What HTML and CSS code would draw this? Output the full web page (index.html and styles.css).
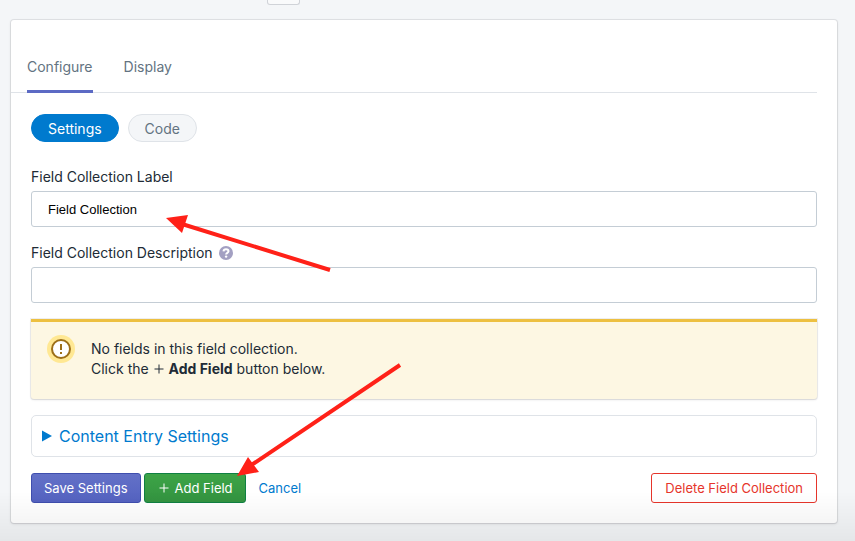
FILE: index.html
```html
<!DOCTYPE html>
<html lang="en">
<head>
  <meta charset="UTF-8">
  <meta name="viewport" content="width=device-width, initial-scale=1.0">
  <title>Field Collection</title>
  <link rel="stylesheet" href="styles.css">
</head>
<body>
<header class="topbar">
  <button type="button" class="topbar-button" aria-label="More"></button>
</header>

<main class="card">
  <nav class="tabs">
    <a href="#configure" class="tab active">Configure</a>
    <a href="#display" class="tab">Display</a>
  </nav>

  <form class="content">
    <div class="pills">
      <button type="button" class="pill selected">Settings</button>
      <button type="button" class="pill">Code</button>
    </div>

    <div class="field">
      <label for="collection-label">Field Collection Label</label>
      <input type="text" id="collection-label" value="Field Collection">
    </div>

    <div class="field">
      <div class="label-row">
        <label for="collection-description">Field Collection Description</label>
        <svg class="help" viewBox="0 0 14 14" aria-hidden="true">
          <circle cx="7" cy="7" r="7" fill="#a3a0c2"/>
          <path d="M4.500 5.400C4.600 3.900 5.700 3.200 7 3.200c1.400 0 2.500.8 2.500 2 0 1.700-2.400 1.500-2.400 3.300" fill="none" stroke="#fff" stroke-width="2"/>
          <circle cx="7.100" cy="10.600" r="1.200" fill="#fff"/>
        </svg>
      </div>
      <input type="text" id="collection-description">
    </div>

    <div class="banner">
      <svg class="banner-icon" viewBox="0 0 28 28" aria-hidden="true">
        <circle cx="14" cy="14" r="14" fill="#ffe893"/>
        <circle cx="14" cy="14" r="9" fill="#fff" stroke="#9c6f19" stroke-width="2"/>
        <path d="M14 9v6M14 17v2" stroke="#9c6f19" stroke-width="2"/>
      </svg>
      <p>No fields in this field collection.<br>
        Click the <svg class="plus" viewBox="0 0 10 10" aria-hidden="true"><path d="M5 0.500v9M0.500 5h9"/></svg> <strong>Add Field</strong> button below.</p>
    </div>

    <details class="entry-settings">
      <summary><svg class="triangle" viewBox="0 0 10 12" aria-hidden="true"><path d="M0 0.500l10 5.500-10 5.500z"/></svg>Content Entry Settings</summary>
    </details>

    <div class="actions">
      <button type="button" class="button primary">Save Settings</button>
      <button type="button" class="button add"><svg class="plus" viewBox="0 0 10 10" aria-hidden="true"><path d="M5 0.500v9M0.500 5h9"/></svg>Add Field</button>
      <a href="#cancel" class="cancel">Cancel</a>
      <button type="button" class="button delete">Delete Field Collection</button>
    </div>
  </form>
</main>

<!-- pointers to the label box and the add button -->
<svg class="arrows" width="420" height="500" aria-hidden="true">
  <path d="M330 270L182 224M400 365L250 466" stroke="#ff2118" stroke-width="4"/>
  <path d="M166 218l22-3-6 18zM237 476l11-19 11 15z" fill="#ff2118"/>
</svg>
</body>
</html>
```

FILE: styles.css
```css
* {
  box-sizing: border-box;
}

body {
  margin: 0;
  min-height: 100vh;
  background: #f4f6f8;
  color: #212b36;
  font-family: Inter, "Liberation Sans", sans-serif;
  font-size: 14px;
  line-height: 20px;
}

/* shade along the bottom of the window */
body::after {
  content: "";
  position: fixed;
  left: 0;
  right: 0;
  bottom: 0;
  height: 50px;
  background: linear-gradient(rgba(0, 0, 0, 0), rgba(0, 0, 0, 0.06));
  pointer-events: none;
}

button, input {
  font-family: inherit;
  font-size: 14px;
}

button {
  cursor: pointer;
}

.topbar {
  display: flex;
  height: 20px;
  padding-left: 267px;
}

.topbar-button {
  width: 33px;
  height: 5px;
  padding: 0;
  border: 1px solid #d0d3d8;
  border-top: none;
  border-radius: 0 0 3px 3px;
  background: #f9fafb;
}

.card {
  margin: 0 18px 0 11px;
  background: #fff;
  border-radius: 3px;
  box-shadow: 0 0 0 1px rgba(63, 63, 68, 0.1), 0 1px 3px rgba(63, 63, 68, 0.15);
}

.tabs {
  display: flex;
  gap: 31px;
  margin-right: 20px;
  padding: 37px 16px 0;
  box-shadow: inset 0 -1px #dfe3e8;
}

.tab {
  padding-bottom: 13px;
  border-bottom: 3px solid transparent;
  color: #637381;
  text-decoration: none;
}

.tab.active {
  border-color: #5c6ac4;
}

.content {
  display: flex;
  flex-direction: column;
  gap: 16px;
  padding: 21px 20px 20px;
}

.pills {
  display: flex;
  gap: 9px;
  margin-bottom: 9px;
}

.pill {
  height: 28px;
  padding: 0 16px;
  border: 1px solid #dfe3e8;
  border-radius: 14px;
  background: #f4f6f8;
  color: #637381;
}

.pill.selected {
  border-color: #007ace;
  background: #007ace;
  color: #fff;
}

.field {
  display: flex;
  flex-direction: column;
  gap: 4px;
}

.label-row {
  display: flex;
  align-items: center;
  gap: 6px;
}

.help {
  width: 14px;
  height: 14px;
}

.field input {
  width: 100%;
  height: 36px;
  padding: 1px 16px 0;
  border: 1px solid #c4cdd5;
  border-radius: 3px;
  color: #000;
  font-family: "Liberation Sans", Arial, sans-serif;
  font-size: 13px;
}

.banner {
  display: flex;
  gap: 16px;
  min-height: 80px;
  padding: 13px 16px 20px;
  border-top: 3px solid #edc041;
  border-radius: 0 0 3px 3px;
  background: #fdf7e3;
  box-shadow: 0 0 0 1px rgba(63, 63, 68, 0.08), 0 1px 2px rgba(63, 63, 68, 0.15);
}

.banner-icon {
  width: 28px;
  height: 28px;
}

.banner p {
  margin: 4px 0 0;
}

.plus {
  width: 10px;
  height: 10px;
  margin: 0 2px;
  fill: none;
  stroke: currentColor;
}

.banner .plus {
  margin: 0 1px;
}

.entry-settings {
  border: 1px solid #dfe3e8;
  border-radius: 5px;
}

.entry-settings summary {
  display: flex;
  align-items: center;
  gap: 7px;
  padding: 10px;
  color: #007ace;
  font-size: 16px;
  cursor: pointer;
}

.triangle {
  width: 10px;
  height: 12px;
  fill: #007ace;
}

.actions {
  display: flex;
  align-items: center;
  gap: 3px;
  font-size: 13px;
}

.button {
  height: 30px;
  padding: 0 12px;
  border: 1px solid;
  border-radius: 3px;
  color: #fff;
  font-size: 13px;
}

.primary {
  border-color: #3f4eae;
  background: linear-gradient(#6371c7, #5563c1);
}

.add {
  display: flex;
  align-items: center;
  gap: 4px;
  border-color: #108043;
  background: linear-gradient(#3da447, #339340);
}

.cancel {
  margin-left: 10px;
  color: #007ace;
  text-decoration: none;
}

.delete {
  margin-left: auto;
  padding: 0 13px;
  border-color: #e6352b;
  background: #fff;
  color: #e6352b;
}

.arrows {
  position: absolute;
  top: 0;
  left: 0;
  pointer-events: none;
}
```
